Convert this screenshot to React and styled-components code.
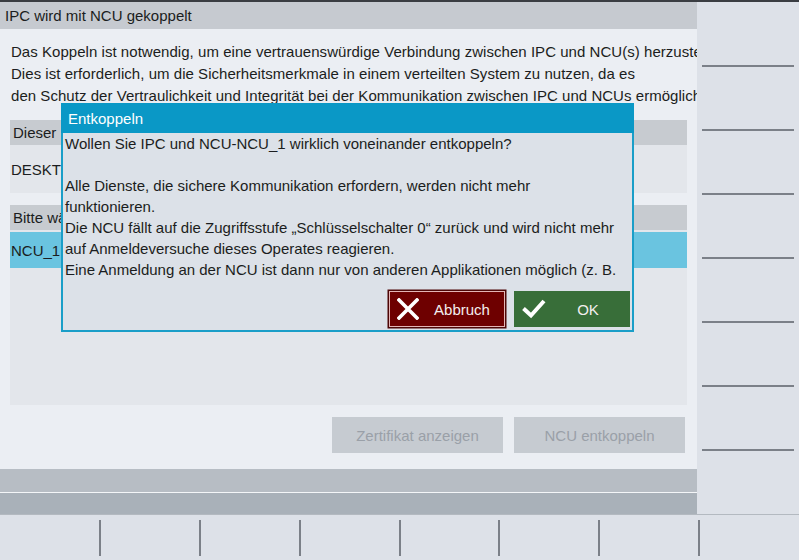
import React from 'react';
import styled, { createGlobalStyle } from 'styled-components';

const GlobalStyle = createGlobalStyle`
  html, body {
    margin: 0;
    padding: 0;
    background: #dde1e8;
  }
  body {
    font-family: "Liberation Sans", Arial, sans-serif;
    color: #1b1d20;
  }
`;

const Screen = styled.div`
  position: relative;
  width: 799px;
  height: 560px;
  display: grid;
  grid-template-columns: 697px 102px;
  grid-template-rows: 2px 512px 46px;
  overflow: hidden;
  background: #dde1e8;
  font-size: 15px;
`;

const TopLine = styled.div`
  grid-column: 1 / 3;
  background: #3a3d42;
`;

const Main = styled.div`
  display: flex;
  flex-direction: column;
  min-width: 0;
`;

const TitleBar = styled.div`
  height: 27px;
  line-height: 28px;
  padding-left: 5px;
  background: #c6cad0;
  white-space: nowrap;
`;

const Content = styled.div`
  flex: 1;
  display: flex;
  flex-direction: column;
  padding: 12px 10px 0;
  background: #ebeef3;
  min-height: 0;
`;

const Intro = styled.div`
  margin-right: -10px;
  padding-left: 1px;
  overflow: hidden;
  white-space: nowrap;
  line-height: 22px;
  letter-spacing: 0.04px;
`;

const Table = styled.div`
  display: flex;
  flex-direction: column;
  margin-top: ${p => p.$gap}px;
  height: ${p => p.$height}px;
  background: #e3e6eb;
`;

const TableHead = styled.div`
  height: 25px;
  line-height: 26px;
  padding-left: 3px;
  background: #c7cbd0;
  white-space: nowrap;
`;

const TableRow = styled.div`
  height: ${p => p.$height}px;
  display: flex;
  align-items: center;
  padding-left: 1px;
  margin-top: ${p => (p.$selected ? 2 : 0)}px;
  background: ${p => (p.$selected ? '#6ac4e0' : 'transparent')};
  white-space: nowrap;
`;

const ActionRow = styled.div`
  display: flex;
  justify-content: flex-end;
  gap: 11px;
  margin-top: 12px;
  padding-right: 2px;
`;

const FlatButton = styled.div`
  width: 171px;
  height: 36px;
  line-height: 37px;
  text-align: center;
  background: #c6cbd1;
  color: #9aa0a8;
`;

const StatusBar = styled.div`
  height: ${p => p.$height}px;
  background: ${p => p.$color};
  border-top: ${p => (p.$split ? '1px solid #f4f6f8' : 'none')};
`;

const SidePanel = styled.div`
  display: flex;
  flex-direction: column;
  background: #dde1e8;
`;

const SideKey = styled.div`
  height: 64px;
  display: flex;
  align-items: flex-end;
  padding: 0 5px;
  &::after {
    content: '';
    display: ${p => (p.$last ? 'none' : 'block')};
    width: 100%;
    height: 2px;
    margin-bottom: -1px;
    background: #7b8088;
  }
`;

const BottomBar = styled.div`
  grid-column: 1 / 3;
  display: flex;
  background: #dde1e8;
  border-top: 1px solid #b3b9c0;
`;

const BottomKey = styled.div`
  width: 100px;
  display: flex;
  justify-content: flex-end;
  padding: 5px 0 4px;
  &::after {
    content: '';
    display: ${p => (p.$last ? 'none' : 'block')};
    width: 2px;
    height: 100%;
    margin-right: -1px;
    background: #7b8088;
  }
`;

const Dialog = styled.div`
  position: absolute;
  left: 61px;
  top: 103px;
  width: 573px;
  height: 229px;
  display: flex;
  flex-direction: column;
`;

const DialogHead = styled.div`
  height: 30px;
  line-height: 31px;
  padding-left: 7px;
  background: #0a98c6;
  color: #fff;
`;

const DialogBody = styled.div`
  flex: 1;
  display: flex;
  flex-direction: column;
  background: #dce1e8;
  border: 2px solid #1a9ec8;
  border-top: none;
`;

const Message = styled.div`
  height: 149px;
  padding-left: 2px;
  overflow: hidden;
  white-space: nowrap;
  line-height: 21px;
`;

const Line = styled.div`
  height: 21px;
`;

const DialogButtons = styled.div`
  display: flex;
  justify-content: flex-end;
  gap: 9px;
  padding: 9px 2px 0 0;
`;

const DialogButton = styled.div`
  width: 116px;
  height: 36px;
  display: flex;
  align-items: center;
  padding-left: 8px;
  box-sizing: border-box;
  background: ${p => p.$color};
  color: #f3eeee;
  box-shadow: ${p => (p.$focused ? 'inset 0 0 0 1px #e4b5b5, 0 0 0 1.5px #4d0606' : 'none')};
`;

const ButtonLabel = styled.span`
  flex: 1;
  text-align: center;
`;

const CrossIcon = () => (
  <svg width="22" height="22" viewBox="0 0 22 22">
    <path d="M2 2 L20 20 M20 2 L2 20" stroke="#fff" strokeWidth="3.6" strokeLinecap="square" fill="none" />
  </svg>
);

const CheckIcon = () => (
  <svg width="24" height="20" viewBox="0 0 24 20">
    <path d="M1.5 9.5 L9 16.5 L22 2" stroke="#fff" strokeWidth="4" fill="none" />
  </svg>
);

const introLines = [
  'Das Koppeln ist notwendig, um eine vertrauenswürdige Verbindung zwischen IPC und NCU(s) herzustellen.',
  'Dies ist erforderlich, um die Sicherheitsmerkmale in einem verteilten System zu nutzen, da es',
  'den Schutz der Vertraulichkeit und Integrität bei der Kommunikation zwischen IPC und NCUs ermöglicht.',
];

const messageLines = [
  'Wollen Sie IPC und NCU-NCU_1 wirklich voneinander entkoppeln?',
  '',
  'Alle Dienste, die sichere Kommunikation erfordern, werden nicht mehr',
  'funktionieren.',
  'Die NCU fällt auf die Zugriffsstufe „Schlüsselschalter 0“ zurück und wird nicht mehr',
  'auf Anmeldeversuche dieses Operates reagieren.',
  'Eine Anmeldung an der NCU ist dann nur von anderen Applikationen  möglich (z. B.',
  'HMI auf der NCU).',
];

export default function App() {
  return (
    <>
      <GlobalStyle />
      <Screen>
        <TopLine />
        <Main>
          <TitleBar>IPC wird mit NCU gekoppelt</TitleBar>
          <Content>
            <Intro>
              {introLines.map((l, i) => <div key={i}>{l}</div>)}
            </Intro>
            <Table $gap={13} $height={73}>
              <TableHead>Dieser IPC</TableHead>
              <TableRow $height={48}>DESKTOP-4R7KQ2M</TableRow>
            </Table>
            <Table $gap={12} $height={200}>
              <TableHead>Bitte wählen Sie die NCU aus</TableHead>
              <TableRow $height={36} $selected>NCU_1</TableRow>
            </Table>
            <ActionRow>
              <FlatButton>Zertifikat anzeigen</FlatButton>
              <FlatButton>NCU entkoppeln</FlatButton>
            </ActionRow>
          </Content>
          <StatusBar $height={23} $color="#b7bdc4" />
          <StatusBar $height={21} $color="#a9b1b9" $split />
        </Main>
        <SidePanel>
          {Array.from({ length: 8 }).map((_, i) => <SideKey key={i} $last={i === 7} />)}
        </SidePanel>
        <BottomBar>
          {Array.from({ length: 8 }).map((_, i) => <BottomKey key={i} $last={i === 7} />)}
        </BottomBar>

        <Dialog>
          <DialogHead>Entkoppeln</DialogHead>
          <DialogBody>
            <Message>
              {messageLines.map((l, i) => <Line key={i}>{l}</Line>)}
            </Message>
            <DialogButtons>
              <DialogButton $color="#6e0000" $focused>
                <CrossIcon />
                <ButtonLabel>Abbruch</ButtonLabel>
              </DialogButton>
              <DialogButton $color="#386e39">
                <CheckIcon />
                <ButtonLabel>OK</ButtonLabel>
              </DialogButton>
            </DialogButtons>
          </DialogBody>
        </Dialog>
      </Screen>
    </>
  );
}
